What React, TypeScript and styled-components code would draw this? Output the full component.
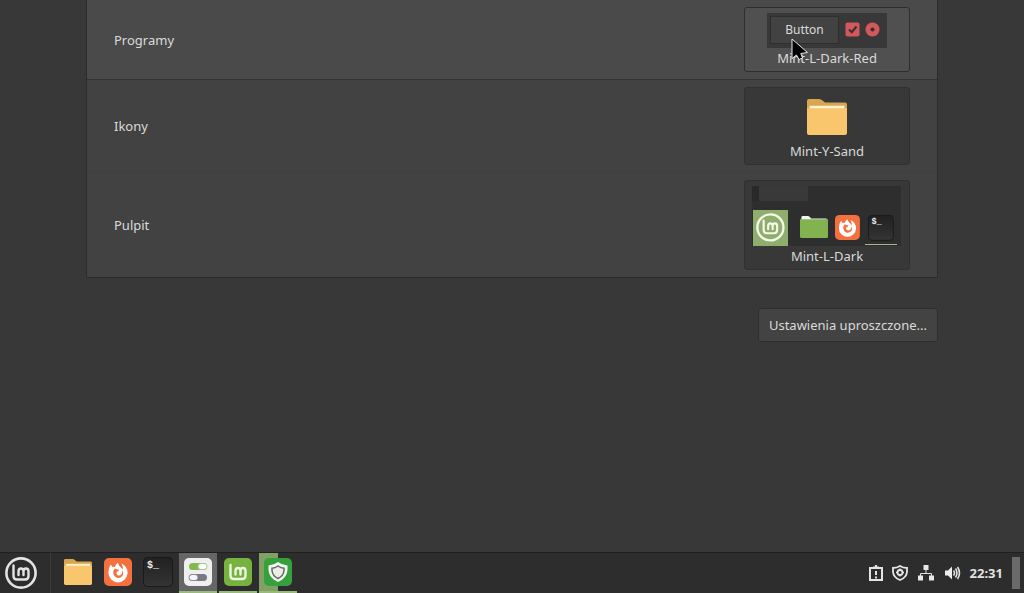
import React from "react";
import styled, { createGlobalStyle } from "styled-components";

const GlobalStyle = createGlobalStyle`
  * { box-sizing: border-box; }
  body {
    margin: 0;
    background: #383838;
    color: #dadada;
    font-family: "Noto Sans", "Open Sans", sans-serif;
    font-size: 13px;
    line-height: 20px;
  }
  button { font: inherit; color: inherit; cursor: default; }
  svg { display: block; }
`;

const Desktop = styled.div`
  min-height: 100vh;
  display: flex;
  flex-direction: column;
`;

const Settings = styled.main`
  flex: 1;
  padding: 0 86px;
  display: flex;
  flex-direction: column;
`;

const Panel = styled.section`
  border: 1px solid #2c2c2c;
  border-top: 0;
  border-radius: 0 0 2px 2px;
  background: #424242;
`;

const Row = styled.div<{ $hovered?: boolean }>`
  display: flex;
  align-items: center;
  justify-content: space-between;
  padding: 7px 27px;
  background: ${(p) => (p.$hovered ? "#4a4a4a" : "transparent")};
  border-bottom: 1px solid ${(p) => (p.$hovered ? "#343434" : "#3f3f3f")};
  &:last-child { border-bottom: 0; }
`;

const ThemeButton = styled.button<{ $hovered?: boolean }>`
  position: relative;
  width: 166px;
  padding: 5px 0 3px;
  display: flex;
  flex-direction: column;
  align-items: center;
  border: 1px solid ${(p) => (p.$hovered ? "#2e2e2e" : "#303030")};
  border-radius: 3px;
  background: ${(p) => (p.$hovered ? "#505050" : "#383838")};
`;

const Pointer = styled.svg`
  position: absolute;
  left: 46px;
  top: 30px;
`;

const WidgetPreview = styled.span`
  width: 120px;
  height: 35px;
  padding: 2px 7px 4px 3px;
  display: flex;
  align-items: center;
  gap: 6px;
  background: #383838;
`;

const SampleButton = styled.span`
  flex: 1;
  height: 28px;
  line-height: 26px;
  font-size: 12px;
  text-align: center;
  border: 1px solid #2e2e2e;
  background: #424242;
`;

const FolderPreview = styled.span`
  height: 48px;
  padding-top: 6px;
`;

const Actions = styled.div`
  display: flex;
  justify-content: flex-end;
  padding: 30px 0;
`;

const SimpleButton = styled.button`
  padding: 6px 10px;
  border: 1px solid #2e2e2e;
  border-radius: 3px;
  background: #434343;
  white-space: nowrap;
`;

const Taskbar = styled.footer`
  height: 41px;
  display: flex;
  align-items: stretch;
  justify-content: space-between;
  border-top: 1px solid #202020;
  background: #2d2d2d;
`;

const Launchers = styled.nav`
  display: flex;
`;

const MenuButton = styled.button`
  width: 42px;
  padding: 0;
  display: grid;
  place-items: center;
  border: 0;
  background: none;
`;

const Separator = styled.span`
  width: 1px;
  margin: 0 8px;
  background: #3c3c3c;
`;

const Apps = styled.div`
  display: flex;
  gap: 2px;
`;

const AppButton = styled.button<{ $state?: "active" | "open" | "progress" }>`
  width: 38px;
  padding: 0;
  display: grid;
  place-items: center;
  border: 0;
  border-bottom: 2px solid ${(p) => (p.$state ? "#9aba7e" : "transparent")};
  background: ${(p) =>
    p.$state === "active"
      ? "#666666"
      : p.$state === "progress"
      ? "linear-gradient(90deg, #80a065 50%, transparent 50%)"
      : "none"};
`;

const Tray = styled.div`
  display: flex;
  align-items: center;
  gap: 9px;
  padding-right: 4px;
`;

const TrayButton = styled.button`
  padding: 0;
  border: 0;
  background: none;
`;

const Clock = styled.time`
  font-weight: 700;
  font-size: 13px;
  color: #e2e2e2;
`;

const ShowDesktop = styled.button`
  width: 8px;
  height: 32px;
  padding: 0;
  border: 0;
  background: #6a6a6a;
`;

const MintMark = ({ color }: { color: string }) => (
  <path
    fill="none"
    stroke={color}
    strokeWidth="2.4"
    strokeLinecap="round"
    strokeLinejoin="round"
    d="M8.500 8.500V19Q8.500 22.500 12 22.500H20Q23.500 22.500 23.500 19V14.500Q23.500 11.500 21 11.500T18.500 14.500V18M18.500 14.500Q18.500 11.500 16 11.500T13.500 14.500V18"
  />
);

const MintRing = ({ size = 34, color = "#e4e4e4" }: { size?: number; color?: string }) => (
  <svg width={size} height={size} viewBox="-1 -1 34 34" aria-hidden="true">
    <circle cx="16" cy="16" r="14.6" fill="none" stroke={color} strokeWidth="2.6" />
    <MintMark color={color} />
  </svg>
);

const FolderArt = ({ back, front, edge }: { back: string; front: string; edge: string }) => (
  <>
    <path fill={back} d="M0 2Q0 0 2 0H12Q14 0 15.500 1.500L18 3.500H38Q40 3.500 40 5.500V20H0Z" />
    <path fill={edge} d="M2.500 6.500H37.500V20H2.500Z" />
    <path fill={front} d="M0 9H40V33Q40 35 38 35H2Q0 35 0 33Z" />
  </>
);

const Folder = ({ width, height }: { width: number; height: number }) => (
  <svg width={width} height={height} viewBox="0 0 40 35" preserveAspectRatio="none" aria-hidden="true">
    <FolderArt back="#d9a650" front="#f9c66d" edge="#fff0d2" />
  </svg>
);

const FirefoxArt = () => (
  <>
    <rect width="28" height="28" rx="5" fill="#f4703f" />
    <path
      fill="#ffffff"
      d="M6.800 6.500L8.600 9Q10 8.600 11 8.800Q11.800 6 14 4.800Q14.200 7 16 8.500Q18.200 10 18.600 12Q19.300 9 17.600 5.500Q23.600 8.500 23.600 14.800A9.600 9.600 0 0 1 4.400 14.800Q4.300 9.800 6.800 6.500Z"
    />
    <path
      fill="#f4703f"
      d="M10.600 10.800Q12 10.500 13.200 11.400L15.200 11.700Q14.900 13.200 12.800 13.800Q11.700 15.600 13.200 16.900Q15.600 18.200 17.500 16.200Q19 14.500 17.800 12Q20.300 15.200 18.400 18Q16 20.600 12.600 19.600Q9.300 18 9.300 14.600Q9.300 12.500 10.600 10.800Z"
    />
  </>
);

const Firefox = () => (
  <svg width="28" height="28" viewBox="0 0 28 28" aria-hidden="true">
    <FirefoxArt />
  </svg>
);

const TerminalArt = () => (
  <>
    <rect x="0.500" y="0.500" width="29" height="29" rx="4" fill="url(#terminal-shade)" stroke="#191919" />
    <text x="4" y="11" fontFamily="Liberation Mono, monospace" fontWeight="700" fontSize="10" fill="#eeeeee">$_</text>
  </>
);

const Terminal = () => (
  <svg width="30" height="30" viewBox="0 0 30 30" aria-hidden="true">
    <defs>
      <linearGradient id="terminal-shade" x2="0" y2="1">
        <stop stopColor="#212121" />
        <stop offset="1" stopColor="#343434" />
      </linearGradient>
    </defs>
    <TerminalArt />
  </svg>
);

const SettingsIcon = () => (
  <svg width="28" height="28" viewBox="0 0 28 28" aria-hidden="true">
    <rect width="28" height="28" rx="5" fill="#efefef" />
    <rect x="5" y="5" width="18" height="7" rx="3.500" fill="#83b94c" />
    <rect x="14" y="5.500" width="9" height="6" rx="3" fill="#ffffff" stroke="#a9c98c" />
    <rect x="5" y="16" width="18" height="7" rx="3.500" fill="#7b7885" />
    <rect x="5" y="16.500" width="9" height="6" rx="3" fill="#f7f7f7" stroke="#8c8997" />
  </svg>
);

const MintTile = () => (
  <svg width="28" height="28" viewBox="0 0 28 28" aria-hidden="true">
    <rect width="28" height="28" rx="5" fill="#75b23e" />
    <g transform="translate(-2 -1.500)"><MintMark color="#edf5e4" /></g>
  </svg>
);

const ShieldTile = () => (
  <svg width="28" height="28" viewBox="0 0 28 28" aria-hidden="true">
    <rect width="28" height="28" rx="5" fill="#35a13b" />
    <path fill="#f3f7f1" d="M14 4Q18 7 23.500 7.500V12Q23 20 14 24Q5 20 4.500 12V7.500Q10 7 14 4Z" />
    <path fill="#e9eee7" stroke="#636a62" strokeWidth="1.500" d="M14 8Q17 10 20 10.200V12.500Q19.500 18 14 20.500Q8.500 18 8 12.500V10.200Q11 10 14 8Z" />
  </svg>
);

const DesktopPreview = () => (
  <svg width="150" height="60" viewBox="0 0 150 60" aria-hidden="true">
    <rect width="149" height="60" fill="#2e2e2e" />
    <rect width="7" height="15" fill="#292929" />
    <rect x="7" width="49" height="15" rx="1" fill="#393939" />
    <rect x="1" y="24" width="35" height="36" fill="#8fae6d" />
    <g transform="translate(4 27) scale(0.900)">
      <circle cx="16" cy="16" r="14.500" fill="none" stroke="#f5f7e8" strokeWidth="2.600" />
      <MintMark color="#f5f7e8" />
    </g>
    <g transform="translate(48 30) scale(0.700 0.630)">
      <path fill="#f4f4f4" d="M2 2Q2 0 4 0H11Q13 0 14 1.500L16 4H38V20H2Z" />
      <path fill="#83b250" d="M0 5H40V33Q40 35 38 35H2Q0 35 0 33Z" />
    </g>
    <g transform="translate(83 29) scale(0.890)"><FirefoxArt /></g>
    <g transform="translate(116 29) scale(0.860)"><TerminalArt /></g>
    <rect x="113" y="58" width="32" height="1" fill="#a4b794" />
  </svg>
);

export default function App() {
  return (
    <Desktop>
      <GlobalStyle />
      <Settings>
        <Panel>
          <Row $hovered>
            <span id="programs">Programy</span>
            <ThemeButton $hovered aria-labelledby="programs programs-theme">
              <WidgetPreview>
                <SampleButton>Button</SampleButton>
                <svg width="35" height="15" viewBox="0 0 35 15" aria-hidden="true">
                  <rect x="0.500" y="0.500" width="14" height="14" rx="2" fill="#d1595d" />
                  <path d="M4 7.500L6.800 10.200L11.500 4.500" fill="none" stroke="#3a2d2e" strokeWidth="2" />
                  <circle cx="27.500" cy="7.500" r="7" fill="#d1595d" />
                  <circle cx="27.500" cy="7.500" r="2" fill="#3a2d2e" />
                </svg>
              </WidgetPreview>
              <span id="programs-theme">Mint-L-Dark-Red</span>
              <Pointer width="18" height="24" viewBox="0 0 18 24" aria-hidden="true">
                <path d="M1 1V20.500L5.500 17L8 21.500L11.500 20L9.800 15.500L16.500 14.500Z" fill="#000000" stroke="#e8e8e8" strokeLinejoin="round" />
              </Pointer>
            </ThemeButton>
          </Row>
          <Row>
            <span id="icons">Ikony</span>
            <ThemeButton aria-labelledby="icons icons-theme">
              <FolderPreview><Folder width={40} height={36} /></FolderPreview>
              <span id="icons-theme">Mint-Y-Sand</span>
            </ThemeButton>
          </Row>
          <Row>
            <span id="desktop">Pulpit</span>
            <ThemeButton aria-labelledby="desktop desktop-theme">
              <DesktopPreview />
              <span id="desktop-theme">Mint-L-Dark</span>
            </ThemeButton>
          </Row>
        </Panel>
        <Actions>
          <SimpleButton>Ustawienia uproszczone...</SimpleButton>
        </Actions>
      </Settings>
      <Taskbar>
        <Launchers>
          <MenuButton aria-label="Menu"><MintRing /></MenuButton>
          <Separator />
          <Apps>
            <AppButton aria-label="Pliki"><Folder width={28} height={26} /></AppButton>
            <AppButton aria-label="Firefox"><Firefox /></AppButton>
            <AppButton aria-label="Terminal"><Terminal /></AppButton>
            <AppButton $state="active" aria-label="Ustawienia"><SettingsIcon /></AppButton>
            <AppButton $state="open" aria-label="Linux Mint"><MintTile /></AppButton>
            <AppButton $state="progress" aria-label="Aktualizacje"><ShieldTile /></AppButton>
          </Apps>
        </Launchers>
        <Tray>
          <TrayButton aria-label="Raporty">
            <svg width="14" height="16" viewBox="0 0 14 16" fill="none" stroke="#e4e4e4" strokeWidth="2">
              <path d="M1 3H13V15H1Z" />
              <path d="M4 2.500H10M7 0V3M7 6V10M7 11.500V13.500" />
            </svg>
          </TrayButton>
          <TrayButton aria-label="Menedżer aktualizacji">
            <svg width="16" height="16" viewBox="0 0 16 16" fill="none" stroke="#e6e6e6">
              <path strokeWidth="1.800" d="M8 1Q11 3 15 3V7Q14.500 12.500 8 15Q1.500 12.500 1 7V3Q5 3 8 1Z" />
              <circle cx="8" cy="7.500" r="2.500" strokeWidth="1.800" />
              <path strokeWidth="1.500" d="M8 3.500V5M8 10V11.500M4 7.500H5.500M10.500 7.500H12" />
            </svg>
          </TrayButton>
          <TrayButton aria-label="Sieć">
            <svg width="18" height="16" viewBox="0 0 18 16" fill="#e8e8e8">
              <path d="M6.500 0H11.500V5H6.500ZM1 10.500H6V15.500H1ZM12 10.500H17V15.500H12Z" />
              <path fill="none" stroke="#e0e0e0" d="M9 5V8.500M3.500 11V8.500H14.500V11" />
            </svg>
          </TrayButton>
          <TrayButton aria-label="Głośność">
            <svg width="17" height="16" viewBox="0 0 17 16">
              <path fill="#eeeeee" d="M1 5.500H4L8 1.500V14.500L4 10.500H1Z" />
              <path fill="none" stroke="#e2e2e2" strokeWidth="1.600" d="M9.500 5.500Q11.500 8 9.500 10.500M11.500 3.500Q14.500 8 11.500 12.500M13.500 2Q17.500 8 13.500 14" />
            </svg>
          </TrayButton>
          <Clock>22:31</Clock>
          <ShowDesktop aria-label="Pokaż pulpit" />
        </Tray>
      </Taskbar>
    </Desktop>
  );
}
